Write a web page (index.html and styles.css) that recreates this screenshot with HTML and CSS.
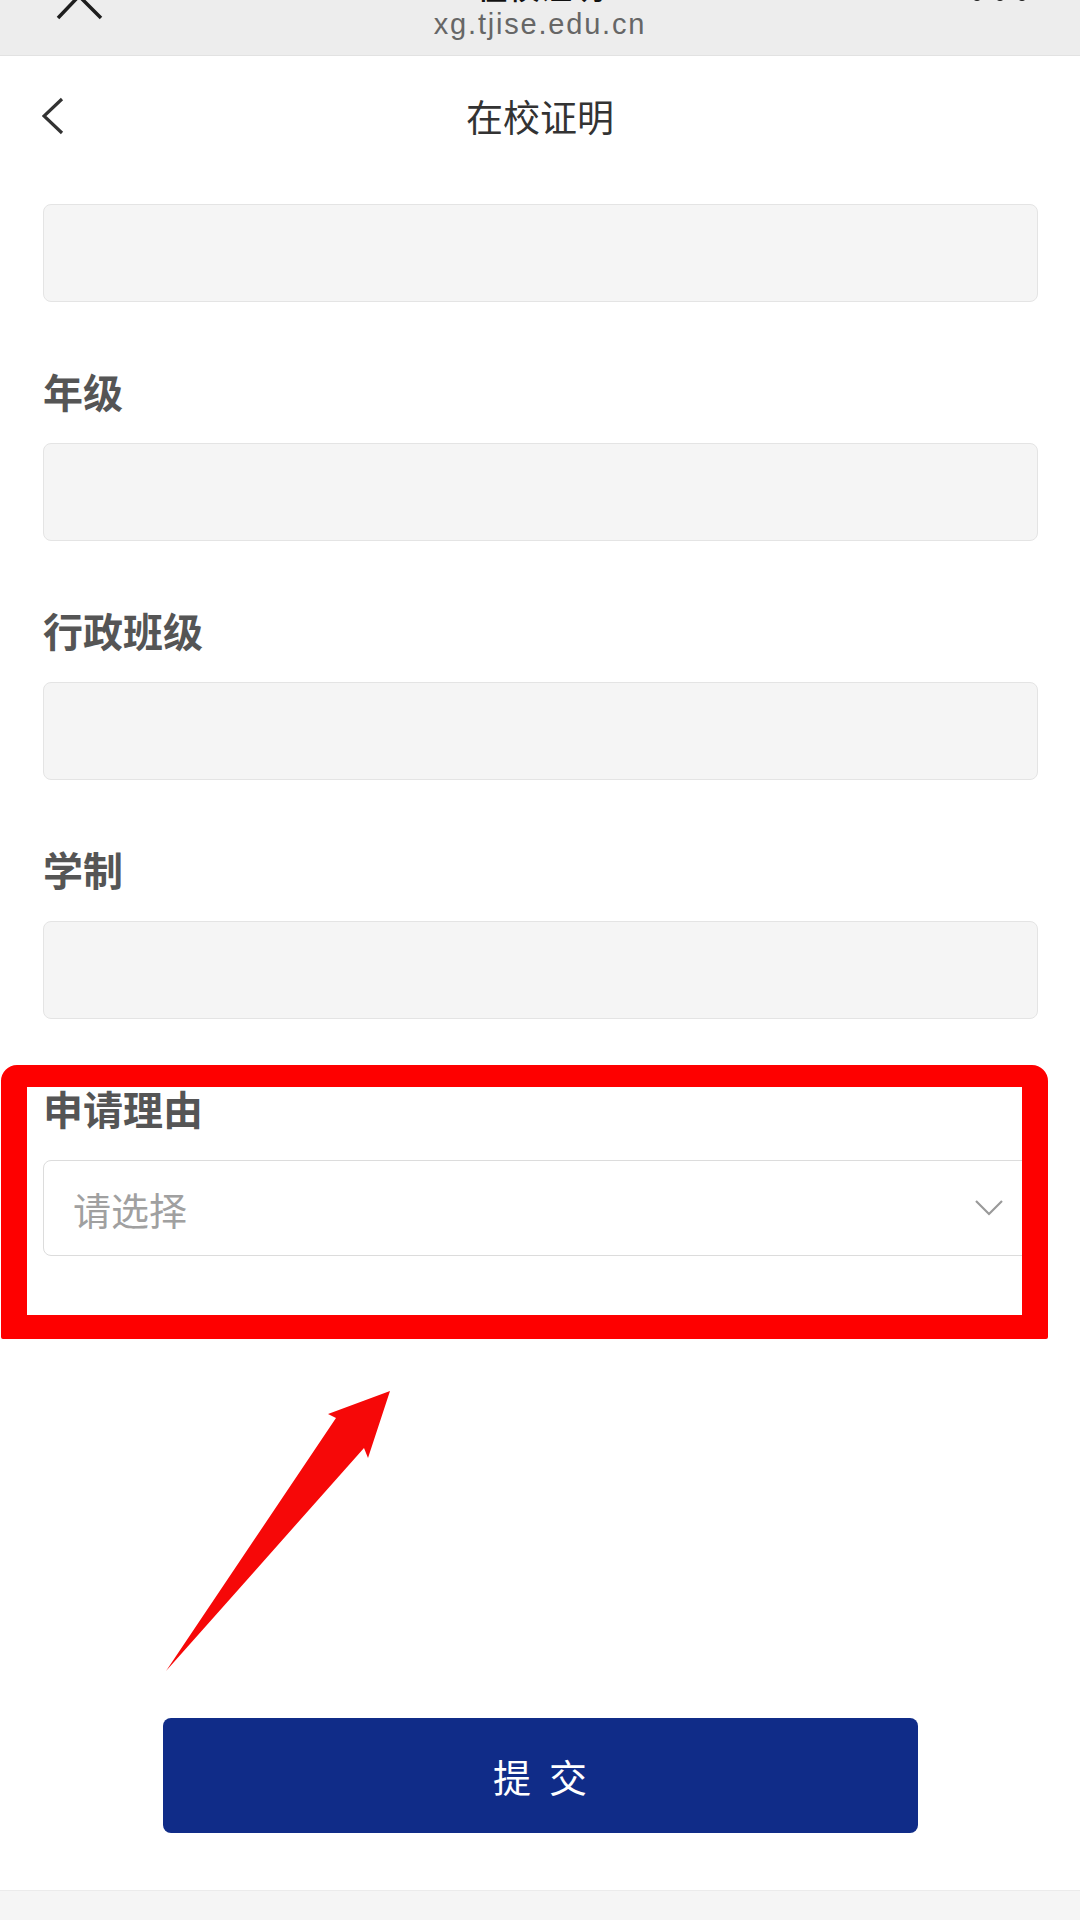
FILE: index.html
```html
<!DOCTYPE html>
<html lang="zh-CN">
<head>
    <meta charset="UTF-8">
    <meta name="viewport" content="width=device-width, initial-scale=1.0">
    <title>在校证明</title>
    <link rel="stylesheet" href="styles.css">
</head>
<body>
    <div class="page">
        <!-- 微信浏览器顶栏 -->
        <div class="topbar">
            <svg class="tb_close" width="48" height="20" viewBox="0 0 48 20">
                <polyline points="2,18 23,-4 45,18" fill="none" stroke="#1e1e1e" stroke-width="3.5"/>
            </svg>
            <div class="tb_center">
                <div class="tb_title">在校证明</div>
                <div class="tb_url">xg.tjise.edu.cn</div>
            </div>
            <svg class="tb_more" width="60" height="4" viewBox="0 0 60 4">
                <circle cx="7" cy="-4" r="5" fill="#1e1e1e"/>
                <circle cx="30" cy="-4" r="5" fill="#1e1e1e"/>
                <circle cx="52" cy="-4" r="5" fill="#1e1e1e"/>
            </svg>
        </div>

        <div class="nav">
            <svg class="back" width="22" height="38" viewBox="0 0 22 38">
                <polyline points="20,2 2,19 20,36" fill="none" stroke="#333" stroke-width="3.2"/>
            </svg>
            <div class="nav_title">在校证明</div>
            <span></span>
        </div>

        <div class="form">
            <div class="input"></div>
            <div class="field">
                <div class="label">年级</div>
                <div class="input"></div>
            </div>
            <div class="field">
                <div class="label">行政班级</div>
                <div class="input"></div>
            </div>
            <div class="field">
                <div class="label">学制</div>
                <div class="input"></div>
            </div>
            <div class="field">
                <div class="label">申请理由</div>
                <div class="select">
                    <span class="placeholder">请选择</span>
                    <svg width="28" height="16" viewBox="0 0 28 16">
                        <polyline points="1,1 14,14 27,1" fill="none" stroke="#9a9a9a" stroke-width="2.2"/>
                    </svg>
                </div>
            </div>
        </div>

        <div class="actions">
            <button class="submit">提交</button>
        </div>

        <div class="bottombar"></div>

        <!-- 标注：红框和箭头 -->
        <div class="mark"></div>
        <svg class="arrow" width="240" height="295" viewBox="0 0 240 295">
            <polygon points="6,286 176,33 168,29 230,6 208,73 204,63" fill="#f60808"/>
        </svg>
    </div>
</body>
</html>
```

FILE: styles.css
```css
*{
    margin: 0;
    padding: 0;
    box-sizing: border-box;
}

body{
    background-color: #fff;
    font-family: "Noto Sans CJK SC", "Liberation Sans", sans-serif;
}

.page{
    position: relative;
    width: 1080px;
    height: 1920px;
    overflow: hidden;
}

.topbar{
    display: grid;
    grid-template-columns: 1fr auto 1fr;
    align-items: start;
    height: 56px;
    background-color: #ededed;
    border-bottom: 1px solid #e2e2e2;
    overflow: hidden;
}

.topbar .tb_close{
    margin-left: 56px;
    overflow: visible;
}

.topbar .tb_more{
    justify-self: end;
    margin-right: 50px;
    overflow: visible;
}

.tb_center{
    display: flex;
    flex-direction: column;
    align-items: center;
}

.tb_title{
    margin-top: -35px;
    font-size: 32px;
    line-height: 40px;
    font-weight: 500;
    color: #111;
}

.tb_url{
    margin-top: 4px;
    font-family: "Liberation Sans", sans-serif;
    font-size: 29px;
    line-height: 30px;
    letter-spacing: 1.8px;
    color: #666;
}

.nav{
    display: grid;
    grid-template-columns: 1fr auto 1fr;
    align-items: center;
    height: 120px;
}

.nav .back{
    margin-left: 42px;
}

.nav_title{
    font-size: 37px;
    line-height: 1;
    color: #333;
}

.form{
    padding: 28px 42px 0 43px;
}

.input{
    height: 98px;
    background-color: #f5f5f5;
    border: 1px solid #e4e4e4;
    border-radius: 8px;
}

.field{
    padding-top: 62px;
}

.label{
    height: 54px;
    margin-bottom: 25px;
    font-size: 40px;
    line-height: 54px;
    font-weight: bold;
    color: #555;
}

.select{
    display: flex;
    align-items: center;
    justify-content: space-between;
    height: 96px;
    padding: 0 34px 0 29px;
    background-color: #fff;
    border: 1px solid #dcdcdc;
    border-radius: 8px;
}

.select .placeholder{
    font-size: 38px;
    color: #a0a0a0;
}

.actions{
    display: flex;
    justify-content: center;
    padding: 462px 0 57px;
}

.submit{
    width: 755px;
    height: 115px;
    padding-left: 18px;
    background-color: #102c88;
    border: none;
    border-radius: 8px;
    font-family: "Noto Sans CJK SC", sans-serif;
    font-size: 38px;
    letter-spacing: 18px;
    color: #fff;
}

.bottombar{
    height: 30px;
    background-color: #f5f5f5;
    border-top: 1px solid #ebebeb;
}

.mark{
    position: absolute;
    left: 1px;
    top: 1065px;
    width: 1047px;
    height: 274px;
    border-style: solid;
    border-color: #fe0000;
    border-width: 22px 26px 24px 26px;
    border-radius: 16px 16px 2px 2px;
}

.arrow{
    position: absolute;
    left: 160px;
    top: 1385px;
}
```
